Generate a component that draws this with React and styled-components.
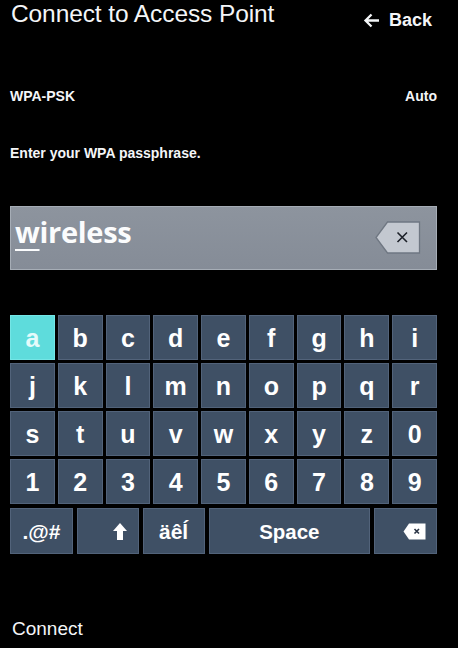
import React from "react";
import styled, { createGlobalStyle } from "styled-components";

const Global = createGlobalStyle`
  html, body { margin: 0; padding: 0; background: #000; }
  body { font-family: "Liberation Sans", Arial, sans-serif; color: #f4f6f8; }
`;

const Screen = styled.div`
  width: 458px;
  height: 648px;
  background: #000;
  display: flex;
  flex-direction: column;
  overflow: hidden;
`;

const Header = styled.div`
  display: flex;
  justify-content: space-between;
  align-items: flex-start;
  padding: 0 26px 0 11px;
`;

const Title = styled.div`
  font-size: 24.5px;
  line-height: 28px;
  font-weight: 400;
  letter-spacing: -0.1px;
`;

const BackButton = styled.div`
  display: flex;
  align-items: center;
  gap: 9px;
  margin-top: 11px;
  font-size: 18px;
  line-height: 18px;
  font-weight: 700;
`;

const InfoRow = styled.div`
  display: flex;
  justify-content: space-between;
  padding: 0 21px 0 10px;
  margin-top: 59px;
  font-size: 14px;
  line-height: 16px;
  font-weight: 700;
`;

const Prompt = styled.div`
  padding-left: 10px;
  margin-top: 41px;
  font-size: 14px;
  line-height: 16px;
  font-weight: 700;
`;

const InputField = styled.div`
  margin: 45px 0 0 10px;
  width: 427px;
  height: 64px;
  box-sizing: border-box;
  border: 1px solid #a6adb6;
  background: linear-gradient(#8d949e, #858c97);
  display: flex;
  justify-content: space-between;
  padding: 8px 15px 0 4px;
`;

const InputText = styled.div`
  font-family: "Open Sans", "Noto Sans", sans-serif;
  font-weight: 700;
  font-size: 29px;
  line-height: 34px;
  color: #fbfcfd;
  letter-spacing: -0.3px;
`;

const Caret = styled.span`
  text-decoration: underline;
  text-decoration-thickness: 2px;
  text-underline-offset: 6px;
`;

const ClearIcon = styled.svg`
  align-self: center;
  margin-top: -9px;
`;

const Keyboard = styled.div`
  margin: 45px 0 0 10px;
  width: 427px;
  display: flex;
  flex-direction: column;
  gap: 3px;
`;

const KeyGrid = styled.div`
  display: grid;
  grid-template-columns: repeat(9, 1fr);
  grid-auto-rows: 45px;
  gap: 3px;
`;

const BottomRow = styled.div`
  display: grid;
  grid-template-columns: 63fr 62fr 62fr 162fr 63fr;
  grid-auto-rows: 46px;
  gap: 4px;
  margin-top: 1px;
`;

const Key = styled.div`
  box-sizing: border-box;
  display: flex;
  align-items: center;
  justify-content: center;
  background: ${(p) => (p.$active ? "#5edcdc" : "#3f5065")};
  border: 1px solid ${(p) => (p.$active ? "#74e6e6" : "#52637a")};
  color: ${(p) => (p.$active ? "#e4fbfb" : "#ffffff")};
  font-weight: 700;
  font-size: ${(p) => p.$size || 25}px;
  line-height: ${(p) => p.$size || 25}px;
  padding-top: ${(p) => p.$pt ?? 2}px;
  padding-left: ${(p) => p.$pl || 0}px;
`;

const Footer = styled.div`
  margin-top: 64px;
  padding-left: 12px;
  font-size: 19px;
  line-height: 22px;
`;

const keys = [
  ..."abcdefghi",
  ..."jklmnopqr",
  ..."stuvwxyz0",
  ..."123456789",
];

export default function App() {
  return (
    <Screen>
      <Global />
      <Header>
        <Title>Connect to Access Point</Title>
        <BackButton>
          <svg width="17" height="15" viewBox="0 0 17 15">
            <path d="M16 7.5H2.5M8.5 1.5L2.5 7.5l6 6" fill="none" stroke="#f4f6f8" strokeWidth="2.3" />
          </svg>
          Back
        </BackButton>
      </Header>
      <InfoRow>
        <span>WPA-PSK</span>
        <span>Auto</span>
      </InfoRow>
      <Prompt>Enter your WPA passphrase.</Prompt>
      <InputField>
        <InputText>
          <Caret>w</Caret>ireless
        </InputText>
        <ClearIcon width="46" height="33" viewBox="0 0 46 33">
          <path d="M12.5 1H44.5V32H12.5L1 16.5Z" fill="#c3c8d0" stroke="#6f7782" strokeWidth="1.3" />
          <path d="M22.5 11.5L32 21M32 11.5L22.5 21" stroke="#1c2028" strokeWidth="1.6" />
        </ClearIcon>
      </InputField>
      <Keyboard>
        <KeyGrid>
          {keys.map((k, i) => (
            <Key key={i} $active={i === 0}>
              {k}
            </Key>
          ))}
        </KeyGrid>
        <BottomRow>
          <Key $size={21} $pt={0}>.@#</Key>
          <Key $pl={24} $pt={0}>
            <svg width="14" height="17" viewBox="0 0 14 17">
              <path d="M7 0L14 8H10V17H4V8H0Z" fill="#ffffff" />
            </svg>
          </Key>
          <Key $size={21} $pt={0}>äêĺ</Key>
          <Key $size={20.5} $pt={2}>Space</Key>
          <Key $pl={18} $pt={0}>
            <svg width="23" height="17" viewBox="0 0 23 17">
              <path d="M6 0.5H22.5V16.5H6L0.5 8.5Z" fill="#ffffff" />
              <path d="M11.5 6L16 10.5M16 6L11.5 10.5" stroke="#2a3444" strokeWidth="1.6" />
            </svg>
          </Key>
        </BottomRow>
      </Keyboard>
      <Footer>Connect</Footer>
    </Screen>
  );
}
